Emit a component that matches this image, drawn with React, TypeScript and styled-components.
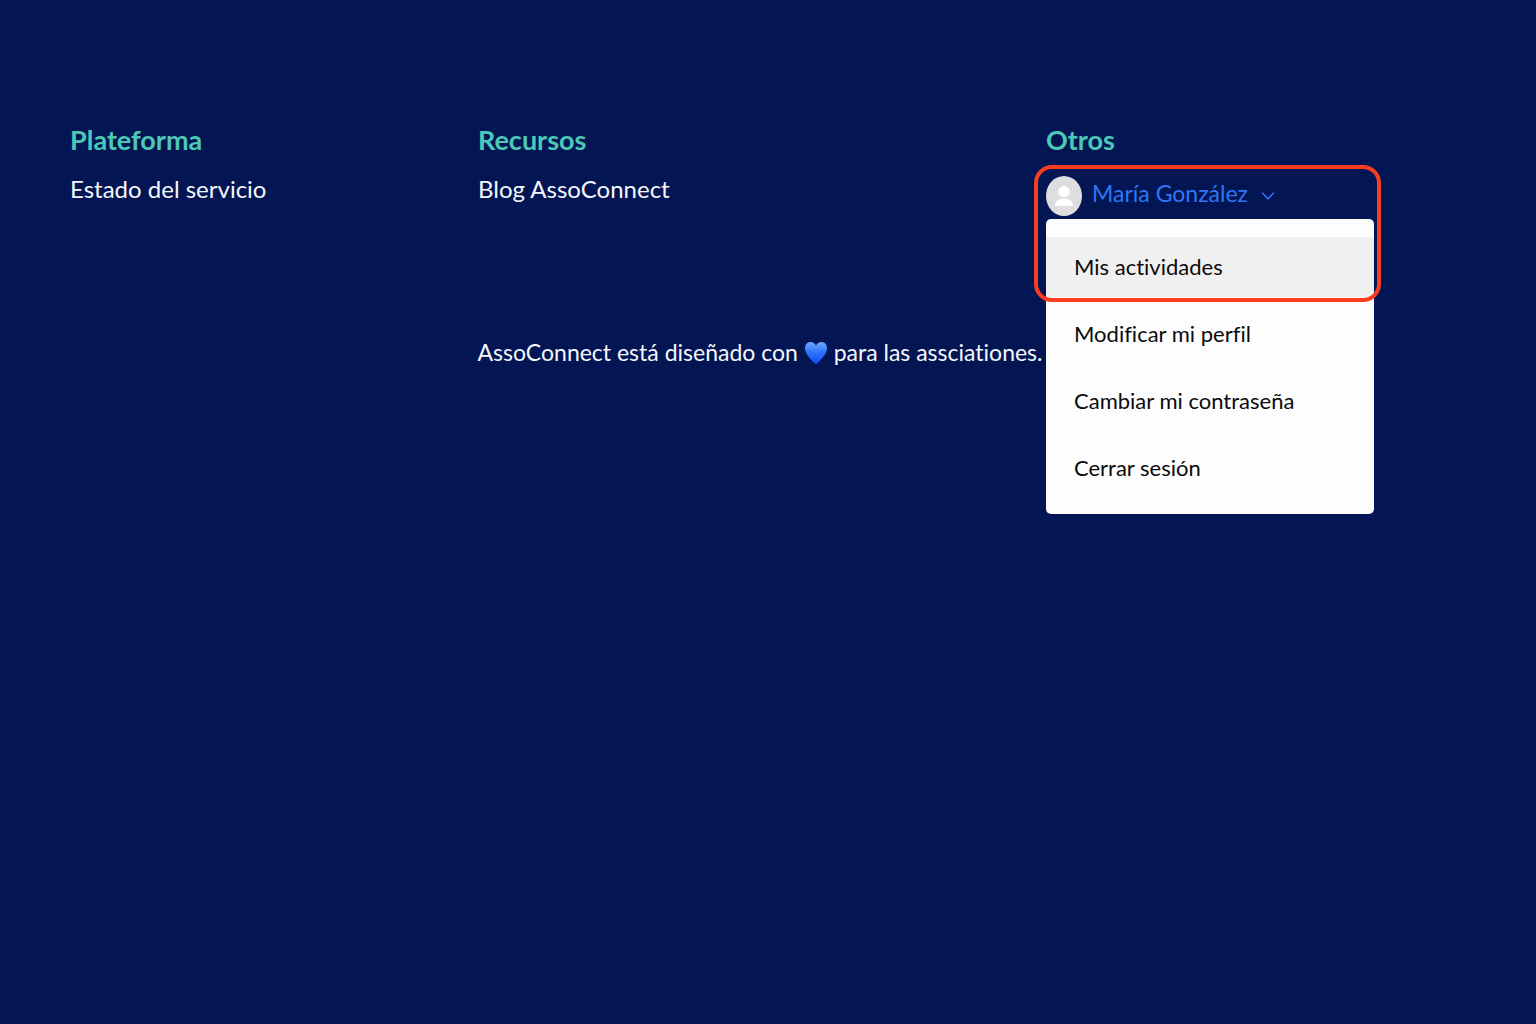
import React from "react";
import styled, { createGlobalStyle } from "styled-components";

const GlobalStyle = createGlobalStyle`
  *, *::before, *::after { box-sizing: border-box; }
  body {
    margin: 0;
    background: #031552;
    color: #f4f6fc;
    font-family: Lato, "Open Sans", sans-serif;
    font-size: 24px;
    line-height: 32px;
    font-variant-ligatures: none;
  }
`;

const Footer = styled.footer`
  min-height: 100vh;
  padding: 123px 70px 0;
`;

const Columns = styled.div`
  display: grid;
  grid-template-columns: 408fr 568fr 420fr;
`;

const Column = styled.section`
  min-width: 0;
`;

const Heading = styled.h2`
  margin: 0 0 16px;
  color: #4cc9b6;
  font-size: 27px;
  font-weight: 700;
  line-height: 34px;
`;

const FooterLink = styled.a`
  color: inherit;
  text-decoration: none;
  white-space: nowrap;
`;

const Account = styled.div`
  position: relative;
  width: 328px;
  height: 36px;
`;

const AccountButton = styled.button`
  display: flex;
  align-items: center;
  gap: 10px;
  height: 46px;
  padding: 0;
  border: 0;
  background: none;
  color: #2f76f6;
  font: inherit;
  font-size: 23px;
  line-height: 28px;
  cursor: pointer;
`;

const AccountName = styled.span`
  padding-bottom: 6px;
`;

const Avatar = styled.svg`
  width: 36px;
  height: 40px;
`;

const Chevron = styled.svg`
  width: 14px;
  height: 10px;
  margin-left: 3px;
`;

const Menu = styled.div`
  position: absolute;
  top: 46px;
  left: 0;
  display: flex;
  flex-direction: column;
  gap: 7px;
  width: 100%;
  padding: 18px 0 16px;
  border-radius: 5px;
  background: #fdfdfd;
`;

const MenuItem = styled.a<{ $active?: boolean }>`
  display: flex;
  align-items: center;
  height: 60px;
  padding: 0 28px;
  background: ${(p) => (p.$active ? "#f0f0f0" : "transparent")};
  color: #0b0b0d;
  font-size: 22px;
  text-decoration: none;
`;

const Highlight = styled.div`
  position: absolute;
  top: -8px;
  left: -12px;
  right: -7px;
  height: 137px;
  border: 4px solid #fb3c22;
  border-radius: 18px;
  pointer-events: none;
`;

const Tagline = styled.p`
  margin: 127px 0 0;
  padding-right: 16px;
  font-size: 23px;
  text-align: center;
  white-space: nowrap;
`;

const Heart = styled.svg`
  width: 24px;
  height: 24px;
  vertical-align: -4px;
`;

const menuItems = [
  "Mis actividades",
  "Modificar mi perfil",
  "Cambiar mi contraseña",
  "Cerrar sesión",
];

export default function App() {
  return (
    <>
      <GlobalStyle />
      <Footer>
        <Columns>
          <Column>
            <Heading>Plateforma</Heading>
            <FooterLink href="#estado">Estado del servicio</FooterLink>
          </Column>
          <Column>
            <Heading>Recursos</Heading>
            <FooterLink href="#blog">Blog AssoConnect</FooterLink>
          </Column>
          <Column>
            <Heading>Otros</Heading>
            <Account>
              <AccountButton type="button" aria-expanded="true">
                <Avatar viewBox="0 0 36 40" aria-hidden="true">
                  <ellipse cx="18" cy="20" rx="18" ry="20" fill="#dedee0" />
                  <circle cx="18" cy="15.5" r="5.6" fill="#fff" />
                  <path d="M9 30c.4-4.800 3.600-7.500 9-7.500s8.600 2.700 9 7.500z" fill="#fff" />
                </Avatar>
                <AccountName>María González</AccountName>
                <Chevron viewBox="0 0 14 10" fill="none" stroke="currentColor" strokeWidth="1.500" aria-hidden="true">
                  <path d="M1.500 2 7 8l5.500-6" strokeLinecap="round" strokeLinejoin="round" />
                </Chevron>
              </AccountButton>
              <Menu>
                {menuItems.map((label, i) => (
                  <MenuItem key={label} href={`#menu-${i}`} $active={i === 0}>
                    {label}
                  </MenuItem>
                ))}
              </Menu>
              <Highlight />
            </Account>
          </Column>
        </Columns>
        <Tagline>
          AssoConnect está diseñado con{" "}
          <Heart viewBox="0 0 24 24" role="img" aria-label="corazón azul">
            <defs>
              <linearGradient id="heart" x1="0" y1="0" x2="0" y2="1">
                <stop offset="0" stopColor="#6fa8ff" />
                <stop offset="0.450" stopColor="#2f74fb" />
                <stop offset="1" stopColor="#0b4af0" />
              </linearGradient>
            </defs>
            <path
              d="M12 23.500C8 19.500 1 13.500 1 7.200 1 3.200 3.600 1 6.600 1 9 1 11 2.300 12 4.700 13 2.300 15 1 17.400 1 20.400 1 23 3.200 23 7.200 23 13.500 16 19.500 12 23.500z"
              fill="url(#heart)"
            />
          </Heart>{" "}
          para las assciationes.
        </Tagline>
      </Footer>
    </>
  );
}
